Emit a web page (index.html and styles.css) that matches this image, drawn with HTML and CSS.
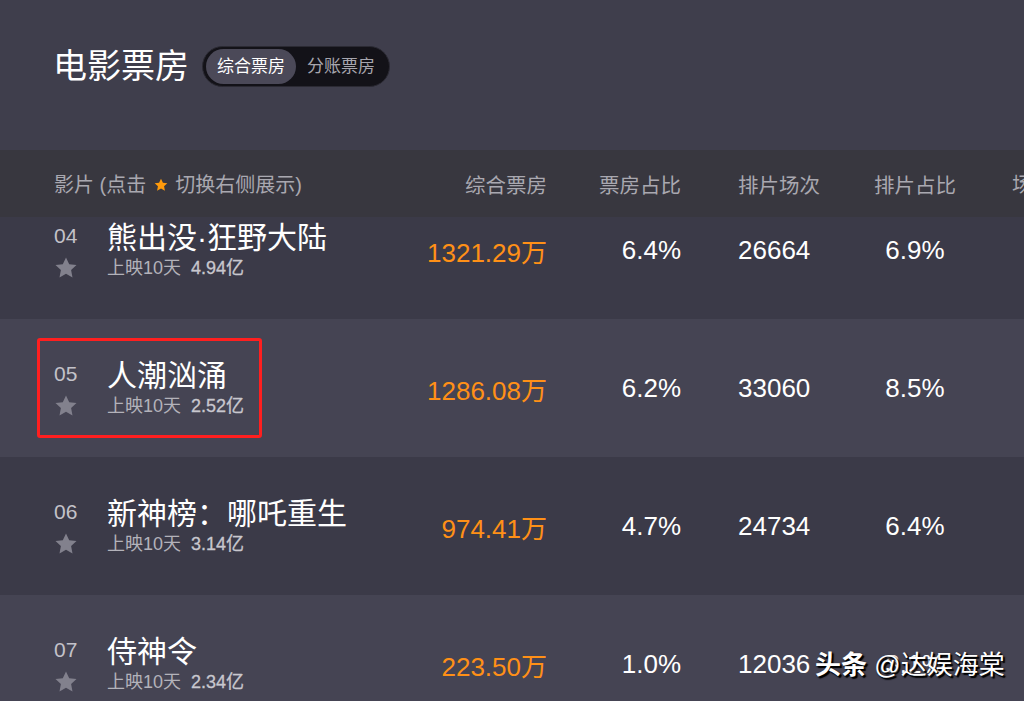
FILE: index.html
```html
<!DOCTYPE html>
<html lang="zh-CN">
<head>
    <meta charset="UTF-8">
    <meta name="viewport" content="width=device-width, initial-scale=1.0">
    <title>电影票房</title>
    <link rel="stylesheet" href="styles.css">
</head>
<body>
    <div class="page">
        <div class="top">
            <h1>电影票房</h1>
            <div class="toggle">
                <span class="tab active">综合票房</span>
                <span class="tab">分账票房</span>
            </div>
        </div>

        <div class="thead">
            <div class="c-name">影片 (点击 <svg class="hstar" viewBox="0 0 24 24"><path d="M12 2.5l2.9 6.1 6.6.8-4.9 4.6 1.3 6.6L12 17.3l-5.9 3.3 1.3-6.6-4.9-4.6 6.6-.8z"/></svg> 切换右侧展示)</div>
            <div class="c-box">综合票房</div>
            <div class="c-rate">票房占比</div>
            <div class="c-show">排片场次</div>
            <div class="c-srate">排片占比</div>
            <div class="c-more">场均</div>
        </div>

        <div class="tbody">
            <div class="row dark first">
                <div class="c-name film">
                    <span class="rank">04</span>
                    <span class="title">熊出没·狂野大陆</span>
                    <svg class="star" viewBox="0 0 24 24"><path d="M12 1.5l3.2 6.7 7.3.9-5.4 5 1.4 7.3L12 17.8l-6.5 3.6 1.4-7.3-5.4-5 7.3-.9z"/></svg>
                    <span class="sub">上映10天<b>4.94亿</b></span>
                </div>
                <div class="c-box money">1321.29万</div>
                <div class="c-rate">6.4%</div>
                <div class="c-show">26664</div>
                <div class="c-srate">6.9%</div>
            </div>

            <div class="row light">
                <div class="mark"></div>
                <div class="c-name film">
                    <span class="rank">05</span>
                    <span class="title">人潮汹涌</span>
                    <svg class="star" viewBox="0 0 24 24"><path d="M12 1.5l3.2 6.7 7.3.9-5.4 5 1.4 7.3L12 17.8l-6.5 3.6 1.4-7.3-5.4-5 7.3-.9z"/></svg>
                    <span class="sub">上映10天<b>2.52亿</b></span>
                </div>
                <div class="c-box money">1286.08万</div>
                <div class="c-rate">6.2%</div>
                <div class="c-show">33060</div>
                <div class="c-srate">8.5%</div>
            </div>

            <div class="row dark">
                <div class="c-name film">
                    <span class="rank">06</span>
                    <span class="title">新神榜：哪吒重生</span>
                    <svg class="star" viewBox="0 0 24 24"><path d="M12 1.5l3.2 6.7 7.3.9-5.4 5 1.4 7.3L12 17.8l-6.5 3.6 1.4-7.3-5.4-5 7.3-.9z"/></svg>
                    <span class="sub">上映10天<b>3.14亿</b></span>
                </div>
                <div class="c-box money">974.41万</div>
                <div class="c-rate">4.7%</div>
                <div class="c-show">24734</div>
                <div class="c-srate">6.4%</div>
            </div>

            <div class="row light">
                <div class="c-name film">
                    <span class="rank">07</span>
                    <span class="title">侍神令</span>
                    <svg class="star" viewBox="0 0 24 24"><path d="M12 1.5l3.2 6.7 7.3.9-5.4 5 1.4 7.3L12 17.8l-6.5 3.6 1.4-7.3-5.4-5 7.3-.9z"/></svg>
                    <span class="sub">上映10天<b>2.34亿</b></span>
                </div>
                <div class="c-box money">223.50万</div>
                <div class="c-rate">1.0%</div>
                <div class="c-show">12036</div>
                <div class="c-srate">3.1%</div>
            </div>
        </div>

        <div class="watermark"><b>头条</b> @达娱海棠</div>
    </div>
</body>
</html>
```

FILE: styles.css
```css
body {
    margin: 0;
    background-color: #3f3e4c;
    font-family: "Liberation Sans", "Noto Sans CJK SC", sans-serif;
    color: #fff;
    overflow: hidden;
}
.page {
    position: relative;
    width: 1024px;
    height: 701px;
    overflow: hidden;
}

/* title bar */
.top {
    height: 150px;
    box-sizing: border-box;
    padding: 46px 0 0 53px;
    display: flex;
    align-items: flex-start;
    gap: 13px;
}
.top h1 {
    margin: 0;
    font-size: 34px;
    font-weight: normal;
    line-height: 41px;
    color: #fff;
}
.toggle {
    display: flex;
    align-items: center;
    height: 41px;
    box-sizing: border-box;
    padding: 0 3px;
    border: 1px solid #2b2a33;
    border-radius: 21px;
    background-color: #131218;
}
.tab {
    padding: 0 11px;
    height: 35px;
    line-height: 35px;
    font-size: 17px;
    color: #a7a6ae;
}
.tab.active {
    border-radius: 18px;
    background-color: #4b4958;
    color: #fff;
}

/* table */
.thead,
.row {
    display: grid;
    grid-template-columns: 346px 147px 134px 174px 120px 100px;
    padding-left: 54px;
    align-items: center;
}
.thead {
    height: 67px;
    background-color: #38373f;
    font-size: 20px;
    color: #a9a8b0;
}
.thead .c-box,
.thead .c-rate,
.thead .c-show,
.thead .c-srate {
    font-size: 20.5px;
}
.hstar {
    width: 16px;
    height: 16px;
    margin: 0 1px;
    fill: #ff9a0b;
    vertical-align: -1px;
}
.c-box,
.c-rate {
    text-align: right;
}
.c-show {
    padding-left: 57px;
}
.c-srate {
    text-align: center;
}
.c-more {
    padding-left: 37px;
    white-space: nowrap;
}

.tbody {
    height: 484px;
    overflow: hidden;
}
.row {
    position: relative;
    height: 138px;
    font-size: 26px;
    color: #fff;
}
.row.first {
    margin-top: -36px;
}
.row.dark {
    background-color: #3b3a48;
}
.row.light {
    background-color: #454453;
}
.money {
    color: #ff9017;
}

.film {
    display: grid;
    grid-template-columns: 53px auto;
    align-items: center;
}
.rank {
    font-size: 21px;
    color: #c3c2c9;
    line-height: 36px;
    margin-top: -4px;
}
.title {
    font-size: 30px;
    line-height: 36px;
    white-space: nowrap;
}
.star {
    width: 24px;
    height: 24px;
    fill: #82818d;
}
.sub {
    font-size: 18px;
    line-height: 24px;
    color: #b3b2ba;
    white-space: nowrap;
}
.sub b {
    font-weight: normal;
    margin-left: 10px;
    color: #c8c7ce;
    -webkit-text-stroke: 0.3px #c8c7ce;
}

/* annotation box around a row */
.mark {
    position: absolute;
    left: 37px;
    top: 19px;
    width: 225px;
    height: 100px;
    box-sizing: border-box;
    border: 3px solid #ff1f1f;
    border-radius: 3px;
}

.watermark {
    position: absolute;
    left: 815px;
    top: 646px;
    font-size: 26px;
    line-height: 38px;
    color: #fff;
    text-shadow: 2px 2px 1px #000, 1px 1px 2px #000;
    white-space: nowrap;
}
```
